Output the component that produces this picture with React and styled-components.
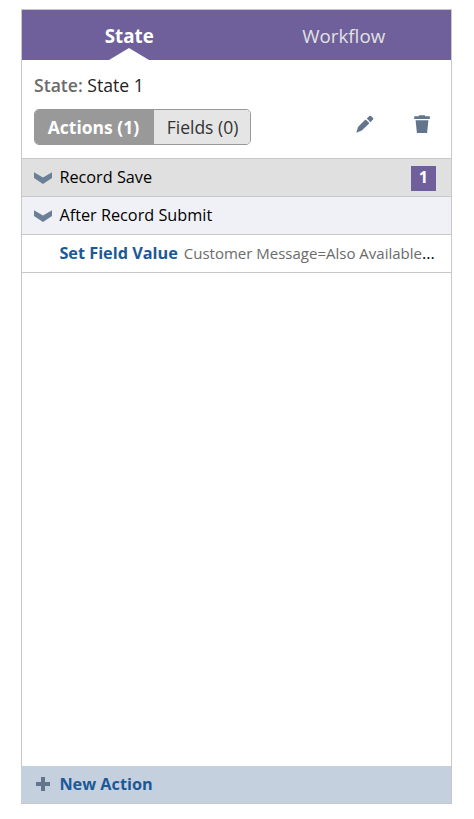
import React from 'react';
import styled, { createGlobalStyle } from 'styled-components';

const GlobalStyle = createGlobalStyle`
  * {
    box-sizing: border-box;
  }
  body {
    margin: 0;
    background: #fff;
    font-family: 'Open Sans', 'Noto Sans', sans-serif;
    font-size: 16.25px;
    color: #000;
  }
`

const Chevron = () => (
  <svg width="18" height="12" viewBox="0 0 18 12" fill="#6b7f96">
    <path d="M0 0.3 L9 5.6 L18 0.3 V5.9 L9 11.9 L0 5.9 Z" />
  </svg>
)

const Pencil = () => (
  <svg width="18" height="18" viewBox="0 0 18 18" fill="#62758c">
    <path d="M0.3 17.7 L2 11.9 L8.9 4.9 Q9.7 4.5 10.5 5.2 L12.8 7.5 Q13.4 8.3 12.7 9.1 L5.8 15.5 Z" />
    <path d="M10.8 3.6 L13.4 1 Q14.2 0.3 15 1 L17 3 Q17.7 3.8 17 4.6 L14.4 7.2 Z" />
  </svg>
)

const Trash = () => (
  <svg width="16" height="18" viewBox="0 0 16 18" fill="#62758c">
    <path d="M0.2 1.2 H4.6 L5.2 0.2 H10.8 L11.4 1.2 H15.8 V4 H0.2 Z" />
    <path d="M1.6 5.2 H14.4 L13.1 17.9 H2.9 Z" />
  </svg>
)

const Plus = () => (
  <svg width="14" height="14" viewBox="0 0 14 14" fill="#62758c">
    <path d="M5 0 H9 V5 H14 V9 H9 V14 H5 V9 H0 V5 H5 Z" />
  </svg>
)

export default function App() {
  return (
    <>
      <GlobalStyle />
      <Panel>
        <Tabs>
          <Tab $active>State</Tab>
          <Tab>Workflow</Tab>
        </Tabs>

        <Header>
          <StateName><b>State:</b> State 1</StateName>
          <Toolbar>
            <ButtonGroup>
              <GroupButton $active>Actions (1)</GroupButton>
              <GroupButton>Fields (0)</GroupButton>
            </ButtonGroup>
            <Tools>
              <IconButton aria-label="Edit"><Pencil /></IconButton>
              <IconButton aria-label="Delete"><Trash /></IconButton>
            </Tools>
          </Toolbar>
        </Header>

        <GroupRow $bg="#e0e0e0">
          <Chevron />
          <RowTitle>Record Save</RowTitle>
          <Badge>1</Badge>
        </GroupRow>
        <GroupRow $bg="#f0f1f6">
          <Chevron />
          <RowTitle>After Record Submit</RowTitle>
        </GroupRow>
        <ActionRow>
          <ActionLink>Set Field Value</ActionLink>
          <ActionDetail>Customer Message=Also Available</ActionDetail>
          <Dots>...</Dots>
        </ActionRow>

        <Footer>
          <Plus />
          <span>New Action</span>
        </Footer>
      </Panel>
    </>
  )
}

const Panel = styled.div`
  display: flex;
  flex-direction: column;
  width: 431px;
  height: 795px;
  margin: 9px 0 0 21px;
  border: 1px solid #c8c8c8;
`
const Tabs = styled.div`
  display: flex;
  height: 50px;
  background: #6f609c;
`
const Tab = styled.div`
  position: relative;
  flex: 1;
  text-align: center;
  font-size: 18.75px;
  line-height: 51px;
  font-weight: ${(p) => (p.$active ? 700 : 400)};
  color: ${(p) => (p.$active ? '#fff' : '#e2e2e2')};

  &::after {
    content: '';
    display: ${(p) => (p.$active ? 'block' : 'none')};
    position: absolute;
    bottom: 0;
    left: 50%;
    margin-left: -20px;
    border: solid transparent;
    border-width: 0 20px 12px;
    border-bottom-color: #fff;
  }
`
const Header = styled.div`
  height: 98px;
  padding: 12px 21px 0 12px;
`
const StateName = styled.div`
  height: 37px;
  font-size: 17.6px;
  line-height: 27px;
  color: #222;
  b {
    font-weight: 600;
    color: #6b6b6b;
  }
`
const Toolbar = styled.div`
  display: flex;
  justify-content: space-between;
`
const ButtonGroup = styled.div`
  display: flex;
  width: 217px;
  height: 36px;
  border: 1px solid #999;
  border-radius: 5px;
  overflow: hidden;
`
const GroupButton = styled.button`
  flex: ${(p) => (p.$active ? '0 0 119px' : '1')};
  padding: ${(p) => (p.$active ? '0 2px 1px 0' : '0 0 1px 1px')};
  border: 0;
  font-family: inherit;
  font-size: 17.5px;
  white-space: nowrap;
  font-weight: ${(p) => (p.$active ? 700 : 400)};
  color: ${(p) => (p.$active ? '#fff' : '#333')};
  background: ${(p) => (p.$active ? '#999' : '#e5e5e5')};
`
const Tools = styled.div`
  display: flex;
  gap: 40px;
  padding-top: 6px;
`
const IconButton = styled.button`
  display: flex;
  height: 18px;
  padding: 0;
  border: 0;
  background: none;
`
const GroupRow = styled.div`
  display: flex;
  align-items: center;
  height: 38px;
  padding: 1px 15px 0 12px;
  border-top: 1px solid #c8c8c8;
  background: ${(p) => p.$bg};

  svg {
    flex: none;
  }
`
const RowTitle = styled.span`
  flex: 1;
  margin: -3px 0 0 7.4px;
`
const Badge = styled.span`
  width: 25px;
  height: 25px;
  line-height: 23px;
  text-align: center;
  font-weight: 700;
  color: #fff;
  background: #6f609c;
`
const ActionRow = styled.div`
  display: flex;
  align-items: baseline;
  height: 39px;
  padding-left: 37.4px;
  line-height: 36px;
  white-space: nowrap;
  border: solid #c8c8c8;
  border-width: 1px 0;
`
const ActionLink = styled.a`
  font-weight: 700;
  color: #1c5996;
`
const ActionDetail = styled.span`
  margin-left: 6px;
  font-size: 15px;
  color: #6b6b6b;
`
const Dots = styled.span`
  color: #000;
`
const Footer = styled.div`
  display: flex;
  align-items: center;
  gap: 9px;
  height: 37px;
  margin: auto 0 0 -1px;
  padding: 0 0 2px 15.4px;
  font-weight: 700;
  color: #1c5996;
  background: #c4d0dd;
`
